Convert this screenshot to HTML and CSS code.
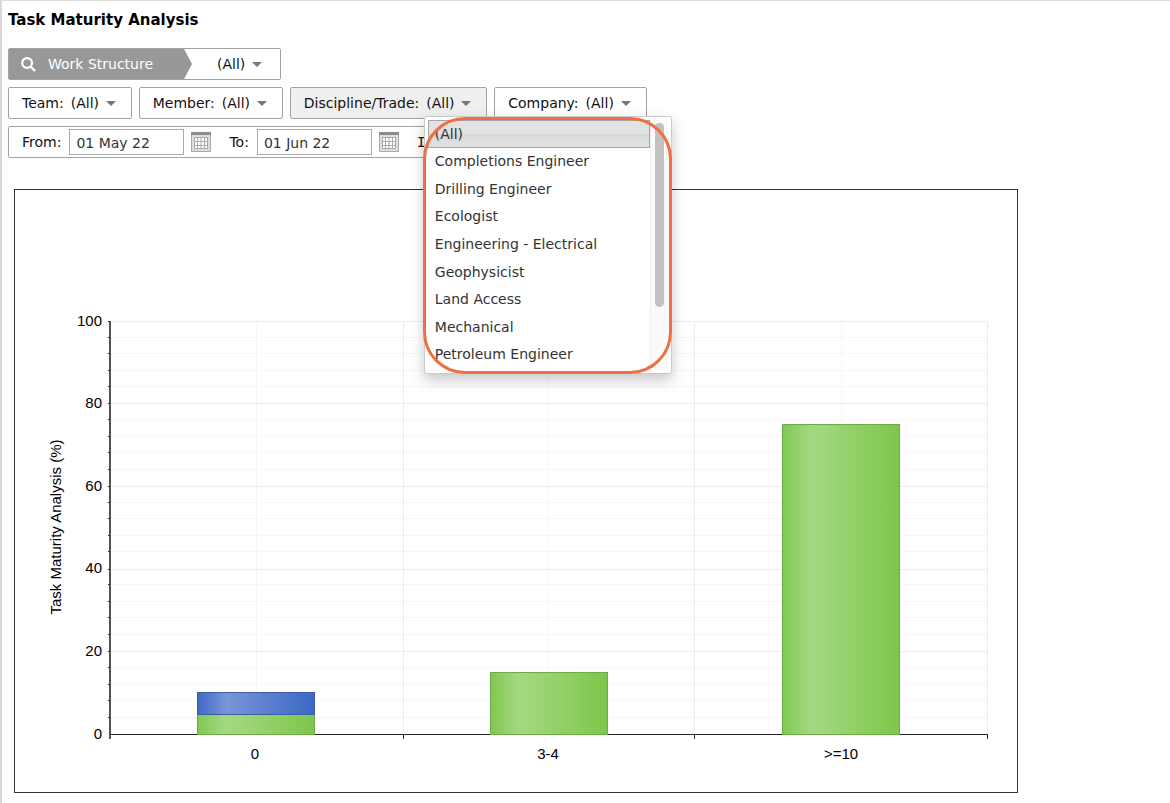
FILE: index.html
```html
<!DOCTYPE html>
<html lang="en">
<head>
<meta charset="utf-8">
<title>Task Maturity Analysis</title>
<link rel="stylesheet" href="styles.css">
</head>
<body>
<main class="page">
  <h1 class="title">Task Maturity Analysis</h1>
  <form class="filters">
    <div class="row">
      <div class="box structure">
        <label class="structure-label" for="structure">
          <svg class="search" viewBox="0 0 16 16" aria-hidden="true"><circle cx="6.5" cy="6.5" r="5.2"/><path d="M10 10l5 5"/></svg>
          Work Structure
        </label>
        <svg class="chevron" viewBox="0 0 8 30" preserveAspectRatio="none" aria-hidden="true"><path d="M0 0L8 15L0 30z"/></svg>
        <span class="picker structure-picker"><select id="structure"><option>(All)</option></select></span>
      </div>
    </div>
    <div class="row">
      <div class="box filter"><label for="team">Team:</label><span class="picker"><select id="team"><option>(All)</option></select></span></div>
      <div class="box filter"><label for="member">Member:</label><span class="picker"><select id="member"><option>(All)</option></select></span></div>
      <div class="box filter open">
        <label for="trade">Discipline/Trade:</label>
        <span class="picker"><select id="trade"><option>(All)</option></select></span>
        <div class="menu">
          <ul class="options" role="listbox" aria-label="Discipline/Trade">
            <li class="option selected" role="option" aria-selected="true">(All)</li>
            <li class="option" role="option">Completions Engineer</li>
            <li class="option" role="option">Drilling Engineer</li>
            <li class="option" role="option">Ecologist</li>
            <li class="option" role="option">Engineering - Electrical</li>
            <li class="option" role="option">Geophysicist</li>
            <li class="option" role="option">Land Access</li>
            <li class="option" role="option">Mechanical</li>
            <li class="option" role="option">Petroleum Engineer</li>
          </ul>
          <div class="track"><div class="thumb"></div></div>
          <div class="highlight"></div>
        </div>
      </div>
      <div class="box filter"><label for="company">Company:</label><span class="picker"><select id="company"><option>(All)</option></select></span></div>
    </div>
    <div class="row">
      <div class="box dates">
        <label for="from">From:</label>
        <input class="date" id="from" type="text" value="01 May 22">
        <button class="calendar" type="button" aria-label="Choose start date">
          <svg viewBox="0 0 20 20" aria-hidden="true"><path class="cal-frame" d="M.5 1h19v18.500H.5z"/><path class="cal-top" d="M0 0h20v3H0z"/><path class="cal-cells" d="M3 5h14v12H3z"/><path class="cal-lines" d="M3 5.500h14M3 9.500h14M3 13.500h14M3 16.500h14M3.500 5v12M6.500 5v12M10 5v12M13.500 5v12M16.500 5v12"/></svg>
        </button>
        <label class="to" for="to">To:</label>
        <input class="date" id="to" type="text" value="01 Jun 22">
        <button class="calendar" type="button" aria-label="Choose end date">
          <svg viewBox="0 0 20 20" aria-hidden="true"><path class="cal-frame" d="M.5 1h19v18.500H.5z"/><path class="cal-top" d="M0 0h20v3H0z"/><path class="cal-cells" d="M3 5h14v12H3z"/><path class="cal-lines" d="M3 5.500h14M3 9.500h14M3 13.500h14M3 16.500h14M3.500 5v12M6.500 5v12M10 5v12M13.500 5v12M16.500 5v12"/></svg>
        </button>
        <span class="interval">I</span>
      </div>
    </div>
  </form>
  <section class="chart">
    <svg class="plot" viewBox="0 0 1002 602" role="img" aria-label="Task maturity analysis by percentage">
      <defs>
        <linearGradient id="green"><stop offset="0" stop-color="#7fc850"/><stop offset=".25" stop-color="#a4d983"/><stop offset="1" stop-color="#7ec64b"/></linearGradient>
        <linearGradient id="blue"><stop offset="0" stop-color="#3c68c5"/><stop offset=".25" stop-color="#7895d7"/><stop offset="1" stop-color="#3b67c5"/></linearGradient>
      </defs>
      <path class="minor" d="M96 147H973M96 163H973M96 180H973M96 196H973M96 229H973M96 246H973M96 262H973M96 279H973M96 312H973M96 328H973M96 345H973M96 361H973M96 394H973M96 411H973M96 427H973M96 444H973M96 477H973M96 494H973M96 510H973M96 527H973M241 131V544M533 131V544M826 131V544"/>
      <path class="major" d="M96 131H973M96 213H973M96 296H973M96 379H973M96 461H973M388 131V544M679 131V544M972 131V544"/>
      <path class="axis" d="M94 544H973M388 544V549M679 544V549M972 544V549"/>
      <path class="axis y-axis" d="M95 131V549"/>
      <path class="ticks" d="M93 131h2M93 147h2M93 163h2M93 180h2M93 196h2M93 213h2M93 229h2M93 246h2M93 262h2M93 279h2M93 296h2M93 312h2M93 328h2M93 345h2M93 361h2M93 379h2M93 394h2M93 411h2M93 427h2M93 444h2M93 461h2M93 477h2M93 494h2M93 510h2M93 527h2"/>
      <g class="bars">
        <rect class="green" x="182" y="524" width="117" height="20"/>
        <rect class="blue" x="182" y="502" width="117" height="22"/>
        <rect class="green" x="475" y="482" width="117" height="62"/>
        <rect class="green" x="767" y="234" width="117" height="310"/>
      </g>
      <g class="y-labels">
        <text x="87" y="136">100</text><text x="87" y="218">80</text><text x="87" y="301">60</text><text x="87" y="383">40</text><text x="87" y="466">20</text><text x="87" y="549">0</text>
      </g>
      <g class="x-labels">
        <text x="240" y="569">0</text><text x="533" y="569">3-4</text><text x="826" y="569">&gt;=10</text>
        <text transform="translate(46 337) rotate(-90)">Task Maturity Analysis (%)</text>
      </g>
    </svg>
  </section>
</main>
</body>
</html>
```
FILE: styles.css
```css
* { box-sizing: border-box; }
body {
  margin: 0;
  background: #fff;
  color: #111;
  font: 14px/20px "DejaVu Sans", Verdana, sans-serif;
}
.page {
  min-height: 100vh;
  padding: 9px 0 10px 6px;
  border-top: 1px solid #ddd;
  border-left: 2px solid #d8d8d8;
}
.title { margin: 0 0 18px; font-size: 15px; line-height: 20px; font-weight: bold; color: #000; }
.filters { display: flex; flex-direction: column; gap: 7px; }
.row { display: flex; gap: 7px; }
.box {
  display: flex;
  align-items: center;
  height: 32px;
  border: 1px solid #a3a3a3;
  border-radius: 2px;
  background: #fff;
}
.filter { position: relative; gap: 7px; padding: 0 15px 0 13px; }
.open { background: #efefef; }

.picker { display: flex; align-items: center; gap: 6px; }
.picker::after {
  content: "";
  border: 5px solid transparent;
  border-top-color: #777;
  border-bottom: 0;
}
select {
  appearance: none;
  margin: 0;
  padding: 0;
  border: 0;
  background: none;
  color: inherit;
  font: inherit;
}
.structure { align-items: stretch; }
.structure-label {
  display: flex;
  align-items: center;
  gap: 12px;
  padding: 0 31px 0 12px;
  background: #989898;
  color: #fff;
}
.search { width: 15px; height: 15px; fill: none; stroke: #fff; stroke-width: 2.4; }
.chevron { width: 8px; height: 30px; fill: #989898; }
.structure-picker { padding: 0 18px 0 25px; }

.dates { padding: 0 220px 0 13px; }
.date {
  width: 115px;
  height: 26px;
  margin-left: 8px;
  padding: 1px 6px 0;
  border: 1px solid #aaa;
  background: #fff;
  color: #333;
  font: inherit;
}
.calendar { width: 20px; height: 20px; margin: 0 0 0 7px; padding: 0; border: 0; background: none; }
.calendar svg { display: block; width: 20px; height: 20px; }
.cal-frame { fill: #ddd; stroke: #aaa; }
.cal-top { fill: #8c8c8c; }
.cal-cells { fill: #fff; }
.cal-lines { fill: none; stroke: #aaa; }
.to { margin-left: 18px; }
.interval { margin-left: 18px; font-family: "DejaVu Sans Mono", monospace; }

.menu {
  position: absolute;
  z-index: 2;
  top: 28px;
  left: 133px;
  display: flex;
  width: 248px;
  height: 258px;
  padding: 3px;
  border: 1px solid #ccc;
  border-radius: 3px;
  background: #fff;
  box-shadow: 0 6px 14px rgba(0, 0, 0, .22);
}
.options {
  display: grid;
  grid-auto-rows: 1fr;
  flex: 1;
  height: 248px;
  margin: 0;
  padding: 0;
  list-style: none;
  color: #333;
}
.option { display: flex; align-items: center; padding: 0 6px; border: 1px solid transparent; white-space: nowrap; }
.selected { border-color: #a5a5a5; background: linear-gradient(#e2e2e2 50%, #d8d8d8 50%, #e2e2e2); }
.track { width: 18px; padding: 3px 4px; border-left: 1px solid #eee; background: #fafafa; }
.thumb { height: 184px; border-radius: 5px; background: #c1c1c1; }
.highlight {
  position: absolute;
  inset: 0 -1px -1px -2px;
  border: 3px solid #ee6f43;
  border-radius: 42px;
  pointer-events: none;
}

.chart { max-width: 1004px; margin: 31px 6px 0; border: 1px solid #333; }
.plot { display: block; width: 100%; height: auto; font: 15px "Liberation Sans", Arial, sans-serif; }
.minor, .major, .axis, .ticks { fill: none; shape-rendering: crispEdges; }
.minor { stroke: #f6f6f6; }
.major { stroke: #ececec; }
.axis { stroke: #222; }
.y-axis { stroke: #555; stroke-width: 2; }
.ticks { stroke: #333; }
.bars rect { shape-rendering: crispEdges; }
.green { fill: url(#green); stroke: #6faa48; }
.blue { fill: url(#blue); stroke: #3c5da8; }
.y-labels { text-anchor: end; }
.x-labels { text-anchor: middle; }
```
